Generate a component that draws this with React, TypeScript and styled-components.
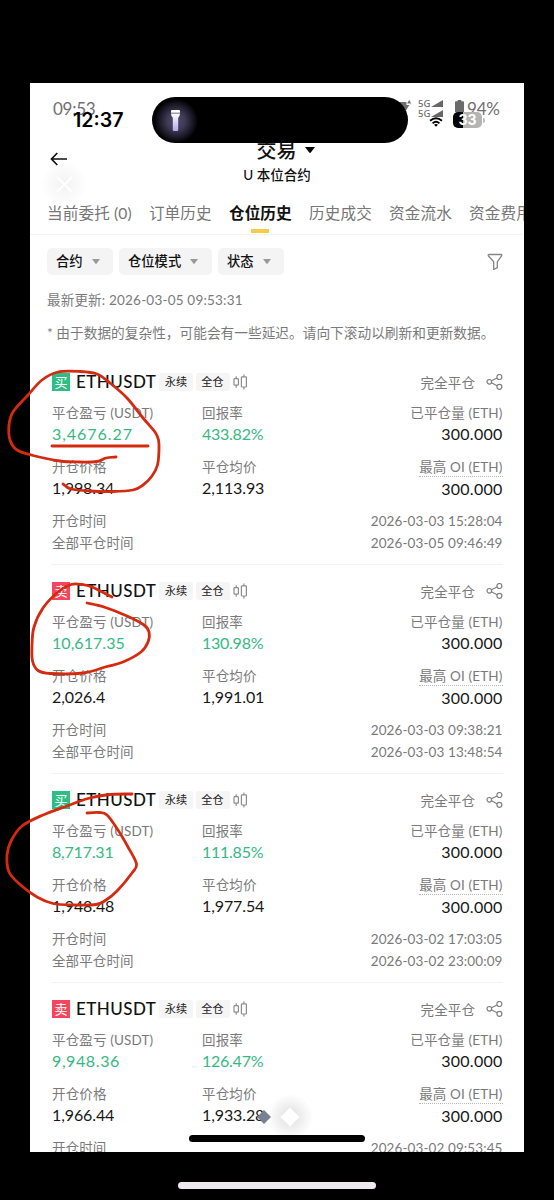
import React from "react";
import styled, { createGlobalStyle } from "styled-components";

const GlobalStyle = createGlobalStyle`
  * { box-sizing: border-box; }
  body {
    margin: 0;
    background: #000;
    font-family: Lato, "Noto Sans CJK SC", sans-serif;
    color: #111;
  }
  svg { display: block; flex: none; }
`;

const Device = styled.div`
  position: relative;
  width: 554px;
  height: 1200px;
  padding: 83px 30px 48px;
  background: #000;
  overflow: hidden;
`;

const Screen = styled.main`
  width: 494px;
  height: 1069px;
  background: #fff;
  overflow: hidden;
`;

const StatusRow = styled.div`
  display: flex;
  justify-content: space-between;
  height: 52px;
  padding: 15px 23px 0 23px;
  color: #707070;
`;

const OldTime = styled.span`
  font-size: 17px;
  line-height: 21px;
  letter-spacing: -0.25px;
`;

const OldStatus = styled.div`
  display: flex;
  align-items: flex-start;
  padding-top: 1px;
`;

const Networks = styled.div`
  display: grid;
  grid-template-columns: 13px 12px;
  margin: 0 12px 0 6px;
  align-items: center;
  font-family: "Noto Sans", sans-serif;
  font-size: 9.5px;
  font-weight: 500;
  line-height: 9.5px;
`;

const Percent = styled.span`
  width: 34px;
  margin-left: 3px;
  font-size: 17px;
  line-height: 19px;
  letter-spacing: -0.2px;
  white-space: nowrap;
`;

const Header = styled.header`
  display: grid;
  grid-template-columns: 80px 1fr 80px;
  height: 63px;
`;

const Back = styled.div`
  padding: 17px 0 0 20px;
`;

const Titles = styled.div`
  display: flex;
  flex-direction: column;
  align-items: center;
`;

const Title = styled.h1`
  display: flex;
  align-items: center;
  gap: 8px;
  height: 30px;
  margin: 0 0 0 17px;
  font-size: 20px;
  line-height: 30px;
  font-weight: 500;
`;

const Subtitle = styled.div`
  font-size: 13.5px;
  font-weight: 500;
  line-height: 20px;
`;

const Tabs = styled.nav`
  display: flex;
  gap: 17.2px;
  height: 37px;
  padding-left: 17px;
  border-bottom: 1px solid #f4f4f4;
  overflow: hidden;
`;

const Tab = styled.span<{ $active?: boolean }>`
  position: relative;
  flex: none;
  height: 36px;
  font-size: 15.6px;
  line-height: 30px;
  letter-spacing: 0.12px;
  white-space: nowrap;
  color: ${(p) => (p.$active ? "#111" : "#767676")};
  font-weight: ${(p) => (p.$active ? 700 : 400)};
  &::after {
    content: "";
    display: ${(p) => (p.$active ? "block" : "none")};
    position: absolute;
    left: 50%;
    bottom: 1px;
    width: 18px;
    height: 4px;
    margin-left: -9px;
    background: #f4ce4b;
  }
`;

const Filters = styled.div`
  display: flex;
  align-items: center;
  gap: 6px;
  padding: 13px 21px 0 17px;
`;

const FilterChip = styled.span<{ $width: number }>`
  display: flex;
  align-items: center;
  gap: 9px;
  width: ${(p) => p.$width}px;
  height: 27px;
  padding-left: 9px;
  border-radius: 5px;
  background: #f4f4f4;
  font-size: 13.3px;
  font-weight: 500;
  line-height: 27px;
`;

const FilterIcon = styled.span`
  margin-left: auto;
`;

const Updated = styled.p`
  margin: 15px 0 0 17px;
  font-size: 13.5px;
  line-height: 21px;
  color: #7a7a7a;
  white-space: nowrap;
  letter-spacing: 0.2px;
`;

const Notice = styled.p`
  margin: 12px 0 0 17px;
  height: 33px;
  font-size: 13.7px;
  line-height: 20px;
  color: #7a7a7a;
  white-space: nowrap;
`;

const Card = styled.article`
  height: 209px;
  margin: 0 21.5px 0 21px;
  padding: 16px 0 0 1px;
  border-bottom: 1px solid #f2f2f2;
`;

const CardHead = styled.div`
  display: flex;
  align-items: center;
  height: 20px;
`;

const Side = styled.span<{ $buy: boolean }>`
  width: 18px;
  height: 18px;
  background: ${(p) => (p.$buy ? "#2ebd85" : "#f6465d")};
  color: #fff;
  font-size: 13px;
  line-height: 18px;
  text-align: center;
`;

const Symbol = styled.span`
  width: 83px;
  margin-left: 6px;
  font-size: 17px;
  font-weight: 500;
  line-height: 20px;
  letter-spacing: 0.45px;
  white-space: nowrap;
`;

const Tag = styled.span`
  width: 34px;
  height: 18px;
  margin-right: 2.5px;
  border-radius: 2px;
  background: #f5f5f5;
  font-size: 11.2px;
  line-height: 17px;
  text-align: center;
  color: #222;
`;

const Status = styled.span`
  margin: 0 10.5px 0 auto;
  font-size: 13.5px;
  letter-spacing: 0.1px;
  color: #7a7a7a;
`;

const Metrics = styled.div<{ $gap: number }>`
  display: grid;
  grid-template-columns: 150px 1fr auto;
  margin-top: ${(p) => p.$gap}px;
  height: 44px;
`;

const Metric = styled.div<{ $end?: boolean }>`
  display: flex;
  flex-direction: column;
  align-items: ${(p) => (p.$end ? "flex-end" : "flex-start")};
`;

const Label = styled.span<{ $dotted?: boolean }>`
  height: 20px;
  font-size: 13.5px;
  line-height: 20px;
  letter-spacing: 0.14px;
  color: #7a7a7a;
  white-space: nowrap;
  border-bottom: ${(p) => (p.$dotted ? "1px dotted #bbb" : "0")};
`;

const Value = styled.span<{ $green?: boolean; $spacing?: number; $drop?: number }>`
  margin-top: ${(p) => 1 + (p.$drop ?? 0)}px;
  font-size: 16px;
  line-height: 20px;
  white-space: nowrap;
  letter-spacing: ${(p) => p.$spacing ?? -0.1}px;
  color: ${(p) => (p.$green ? "#36b883" : "#171717")};
`;

const TimeRow = styled.div<{ $gap: number }>`
  display: flex;
  justify-content: space-between;
  margin-top: ${(p) => p.$gap}px;
  font-size: 13.5px;
  line-height: 20px;
  letter-spacing: 0.1px;
  color: #7a7a7a;
`;

const Island = styled.div`
  position: absolute;
  left: 152px;
  top: 97px;
  width: 256px;
  height: 46px;
  border-radius: 23px;
  background: radial-gradient(circle 22px at 24px 24px, #514b68 0, #403b54 40%, #16141f 80%, #000 100%);
  background-color: #000;
`;

const Torch = styled.span`
  display: block;
  margin: 13px 0 0 18px;
`;

const Clock = styled.div`
  position: absolute;
  left: 73px;
  top: 109px;
  font-family: Inter, sans-serif;
  font-size: 19.6px;
  font-weight: 600;
  line-height: 23px;
  color: #000;
`;

const WifiMark = styled.div`
  position: absolute;
  left: 429px;
  top: 117px;
`;

const BatteryPill = styled.div`
  position: absolute;
  left: 453px;
  top: 112px;
  width: 29px;
  height: 16px;
  border-radius: 5px;
  background: linear-gradient(90deg, #000 10px, #b4b4b4 10px);
  color: #fff;
  font-family: Inter, sans-serif;
  font-size: 14px;
  font-weight: 700;
  line-height: 16px;
  text-align: center;
  &::after {
    content: "";
    position: absolute;
    right: -3px;
    top: 6px;
    width: 2px;
    height: 5px;
    border-radius: 0 2px 2px 0;
    background: #bbb;
  }
`;

const Ghost = styled.div<{ $x: number; $y: number; $glow: string }>`
  position: absolute;
  left: ${(p) => p.$x}px;
  top: ${(p) => p.$y}px;
  width: 48px;
  height: 48px;
  background: radial-gradient(circle, ${(p) => p.$glow}, rgba(0, 0, 0, 0) 68%);
`;

const HomeBar = styled.div<{ $x: number; $y: number; $w: number; $color: string }>`
  position: absolute;
  left: ${(p) => p.$x}px;
  top: ${(p) => p.$y}px;
  width: ${(p) => p.$w}px;
  height: 7px;
  border-radius: 4px;
  background: ${(p) => p.$color};
`;

const MarkerPen = styled.svg`
  position: absolute;
  inset: 0;
  pointer-events: none;
`;

type Point = [number, number];

const strokes: Point[][] = [
  [[63, 484], [71, 489], [90, 491], [113, 491.5], [133, 490], [143, 485], [152, 476], [157.5, 465], [159, 450], [158.5, 440], [155, 432], [143, 418], [127, 398], [110, 383], [97, 374], [80, 371.5], [58, 372], [42, 380], [28, 395], [13, 412], [9, 425], [10, 440], [17, 450], [33, 455.5], [60, 461], [80, 462], [97, 461.5], [106, 458], [116, 457]],
  [[52, 446], [148, 446]],
  [[112, 597], [92, 587], [82, 584.5], [71, 584.5], [58, 592], [43, 608], [34, 627], [32, 645], [32.5, 661], [38, 670.5], [50, 673.5], [83, 673], [107, 666.5], [123, 662], [141, 652], [148, 642], [149, 632], [144, 625], [127, 616], [104, 607], [87, 603]],
  [[132, 794], [110, 794.5], [88, 798.5], [67, 806], [43, 815], [22, 826], [11, 841], [7, 855], [9, 872], [20, 884.5], [37, 897], [53, 903.5], [73, 905], [96, 904.5], [106, 900], [117, 891], [132, 873], [136.5, 864], [128, 847], [118, 830], [107, 815], [99, 812.5], [87, 813]],
];

function smooth(points: Point[]) {
  let d = `M${points[0].join(" ")}`;
  for (let i = 0; i < points.length - 1; i++) {
    const a = points[i - 1] ?? points[i];
    const b = points[i];
    const c = points[i + 1];
    const e = points[i + 2] ?? c;
    d += ` C${b[0] + (c[0] - a[0]) / 6} ${b[1] + (c[1] - a[1]) / 6} ${c[0] - (e[0] - b[0]) / 6} ${c[1] - (e[1] - b[1]) / 6} ${c[0]} ${c[1]}`;
  }
  return d;
}

const Caret = ({ color = "#999", w = 8, h = 5 }: { color?: string; w?: number; h?: number }) => (
  <svg width={w} height={h} viewBox="0 0 8 5" preserveAspectRatio="none">
    <path d="M0 0h8L4.6 4.6a.8.8 0 0 1-1.2 0z" fill={color} />
  </svg>
);

const Candles = () => (
  <svg width="16" height="16" viewBox="0 0 16 16" fill="none" stroke="#8c8c8c" strokeWidth="1.2">
    <path d="M4.200 2.200v2.400M4.200 11.200v2.600" />
    <rect x="2" y="4.600" width="4.400" height="6.600" rx="0.800" />
    <path d="M11.900.6v2.200M11.900 13v2.400" />
    <rect x="9.400" y="2.800" width="5" height="10.200" rx="0.800" />
  </svg>
);

const Share = () => (
  <svg width="17" height="16" viewBox="0 0 17 16" fill="none" stroke="#808080" strokeWidth="1.2">
    <circle cx="3.3" cy="7.8" r="2.3" />
    <circle cx="13.400" cy="3" r="2.500" />
    <circle cx="13.400" cy="12.800" r="2.500" />
    <path d="M5.400 6.800 11.100 4M5.400 8.800l5.700 2.900" />
  </svg>
);

interface Position {
  buy: boolean;
  pnl: string;
  spacing: number;
  roi: string;
  open: string;
  close: string;
  opened: string;
  closed: string;
}

const positions: Position[] = [
  { buy: true, pnl: "3,4676.27", spacing: 0.95, roi: "433.82%", open: "1,998.34", close: "2,113.93", opened: "2026-03-03 15:28:04", closed: "2026-03-05 09:46:49" },
  { buy: false, pnl: "10,617.35", spacing: 0.05, roi: "130.98%", open: "2,026.4", close: "1,991.01", opened: "2026-03-03 09:38:21", closed: "2026-03-03 13:48:54" },
  { buy: true, pnl: "8,717.31", spacing: -0.2, roi: "111.85%", open: "1,948.48", close: "1,977.54", opened: "2026-03-02 17:03:05", closed: "2026-03-02 23:00:09" },
  { buy: false, pnl: "9,948.36", spacing: 0.6, roi: "126.47%", open: "1,966.44", close: "1,933.28", opened: "2026-03-02 09:53:45", closed: "" },
];

const PositionCard = ({ p }: { p: Position }) => (
  <Card>
    <CardHead>
      <Side $buy={p.buy}>{p.buy ? "买" : "卖"}</Side>
      <Symbol>ETHUSDT</Symbol>
      <Tag>永续</Tag>
      <Tag>全仓</Tag>
      <Candles />
      <Status>完全平仓</Status>
      <Share />
    </CardHead>
    <Metrics $gap={11}>
      <Metric>
        <Label>平仓盈亏 (USDT)</Label>
        <Value $green $spacing={p.spacing}>{p.pnl}</Value>
      </Metric>
      <Metric>
        <Label>回报率</Label>
        <Value $green $spacing={-0.25}>{p.roi}</Value>
      </Metric>
      <Metric $end>
        <Label>已平仓量 (ETH)</Label>
        <Value $spacing={0.25}>300.000</Value>
      </Metric>
    </Metrics>
    <Metrics $gap={10}>
      <Metric>
        <Label>开仓价格</Label>
        <Value>{p.open}</Value>
      </Metric>
      <Metric>
        <Label>平仓均价</Label>
        <Value>{p.close}</Value>
      </Metric>
      <Metric $end>
        <Label $dotted>最高 OI (ETH)</Label>
        <Value $drop={1} $spacing={0.25}>300.000</Value>
      </Metric>
    </Metrics>
    <TimeRow $gap={9.5}>
      <span>开仓时间</span>
      <span>{p.opened}</span>
    </TimeRow>
    {p.closed && (
      <TimeRow $gap={2.5}>
        <span>全部平仓时间</span>
        <span>{p.closed}</span>
      </TimeRow>
    )}
  </Card>
);

export default function App() {
  return (
    <Device>
      <GlobalStyle />
      <Screen>
        <StatusRow>
          <OldTime>09:53</OldTime>
          <OldStatus>
            <svg width="14" height="14" viewBox="0 0 14 14" fill="#707070">
              <path d="M0 3h8.500v3h2.800L8 11.500 0 8zM11.200.8l2 3.800h-4z" />
            </svg>
            <Networks>
              <span>5G</span>
              <svg width="12" height="7" viewBox="0 0 12 7"><path d="M12 0v7H0z" fill="#666" /></svg>
              <span>5G</span>
              <svg width="12" height="7" viewBox="0 0 12 7"><path d="M12 0v7H0z" fill="#666" /></svg>
            </Networks>
            <svg width="9" height="13" viewBox="0 0 9 13"><path d="M2.700 1h3.600v1.200H8q1 0 1 1V13H0V3.200q0-1 1-1h1.700z" fill="#6b6b6b" /></svg>
            <Percent>94%</Percent>
          </OldStatus>
        </StatusRow>

        <Header>
          <Back>
            <svg width="18" height="14" viewBox="0 0 18 14" fill="none" stroke="#111" strokeWidth="1.7">
              <path d="M17 7H1.600M7.300 1 1.500 7l5.800 6" />
            </svg>
          </Back>
          <Titles>
            <Title>交易<Caret color="#000" w={10} h={6} /></Title>
            <Subtitle>U 本位合约</Subtitle>
          </Titles>
        </Header>

        <Tabs>
          <Tab>当前委托 (0)</Tab>
          <Tab>订单历史</Tab>
          <Tab $active>仓位历史</Tab>
          <Tab>历史成交</Tab>
          <Tab>资金流水</Tab>
          <Tab>资金费用</Tab>
        </Tabs>

        <Filters>
          <FilterChip $width={66}>合约<Caret /></FilterChip>
          <FilterChip $width={93}>仓位模式<Caret /></FilterChip>
          <FilterChip $width={66}>状态<Caret /></FilterChip>
          <FilterIcon>
            <svg width="16" height="18" viewBox="0 0 16 18" fill="none" stroke="#858585" strokeWidth="1.3" strokeLinejoin="round">
              <path d="M2 1.500h12c.7 0 1 .7.700 1.200L10.300 8.800v5.800l-3.600 1.900V8.800L1.300 2.700C1 2.200 1.300 1.500 2 1.500z" />
            </svg>
          </FilterIcon>
        </Filters>

        <Updated>最新更新: 2026-03-05 09:53:31</Updated>
        <Notice>* 由于数据的复杂性，可能会有一些延迟。请向下滚动以刷新和更新数据。</Notice>

        {positions.map((p) => (
          <PositionCard key={p.opened} p={p} />
        ))}
      </Screen>

      <Island>
        <Torch>
          <svg width="11" height="22" viewBox="0 0 11 22">
            <defs>
              <linearGradient id="beam" x1="0" y1="0" x2="0" y2="1">
                <stop offset="0" stopColor="#fff" />
                <stop offset="1" stopColor="#b3a7ef" />
              </linearGradient>
            </defs>
            <path d="M2 0h7q1 0 1 1v1.800H1V1q0-1 1-1z" fill="#fff" />
            <path d="M1 3.600h9q0 2.500-1.800 4.200V20q0 1-1 1H3.800q-1 0-1-1V7.800Q1 6.100 1 3.600z" fill="url(#beam)" />
          </svg>
        </Torch>
      </Island>
      <Clock>12:37</Clock>
      <WifiMark>
        <svg width="14" height="10" viewBox="0 0 16 11" fill="none" stroke="#000" strokeWidth="2.200">
          <path d="M1.200 4.200Q8-1.500 14.800 4.200M4.100 7.100Q8 3.500 11.900 7.100" />
          <path d="M5.700 8.700Q8 6.900 10.300 8.700L8 11z" fill="#000" stroke="none" />
        </svg>
      </WifiMark>
      <BatteryPill>33</BatteryPill>

      <Ghost $x={40} $y={160} $glow="rgba(0,0,0,.05)">
        <svg width="48" height="48" fill="none" stroke="#fff" strokeWidth="1.800">
          <path d="m17 17 15 15M32 17 17 32" />
        </svg>
      </Ghost>
      <Ghost $x={266} $y={1093} $glow="rgba(0,0,0,.13)">
        <svg width="48" height="48"><path d="m24 14.500 9.500 9.500-9.500 9.500L14.500 24z" fill="#fff" /></svg>
      </Ghost>
      <Ghost $x={239.5} $y={1093} $glow="rgba(0,0,0,0)">
        <svg width="48" height="48"><path d="m24 17 7 7-7 7-7-7z" fill="#778191" /></svg>
      </Ghost>

      <HomeBar $x={189} $y={1135} $w={176} $color="#000" />
      <HomeBar $x={178} $y={1182} $w={198} $color="#eee9ed" />

      <MarkerPen width="554" height="1200" fill="none" stroke="#d32a10" strokeWidth="2.800" strokeLinecap="round" strokeLinejoin="round">
        {strokes.map((s, i) => (
          <path key={i} d={smooth(s)} />
        ))}
      </MarkerPen>
    </Device>
  );
}
